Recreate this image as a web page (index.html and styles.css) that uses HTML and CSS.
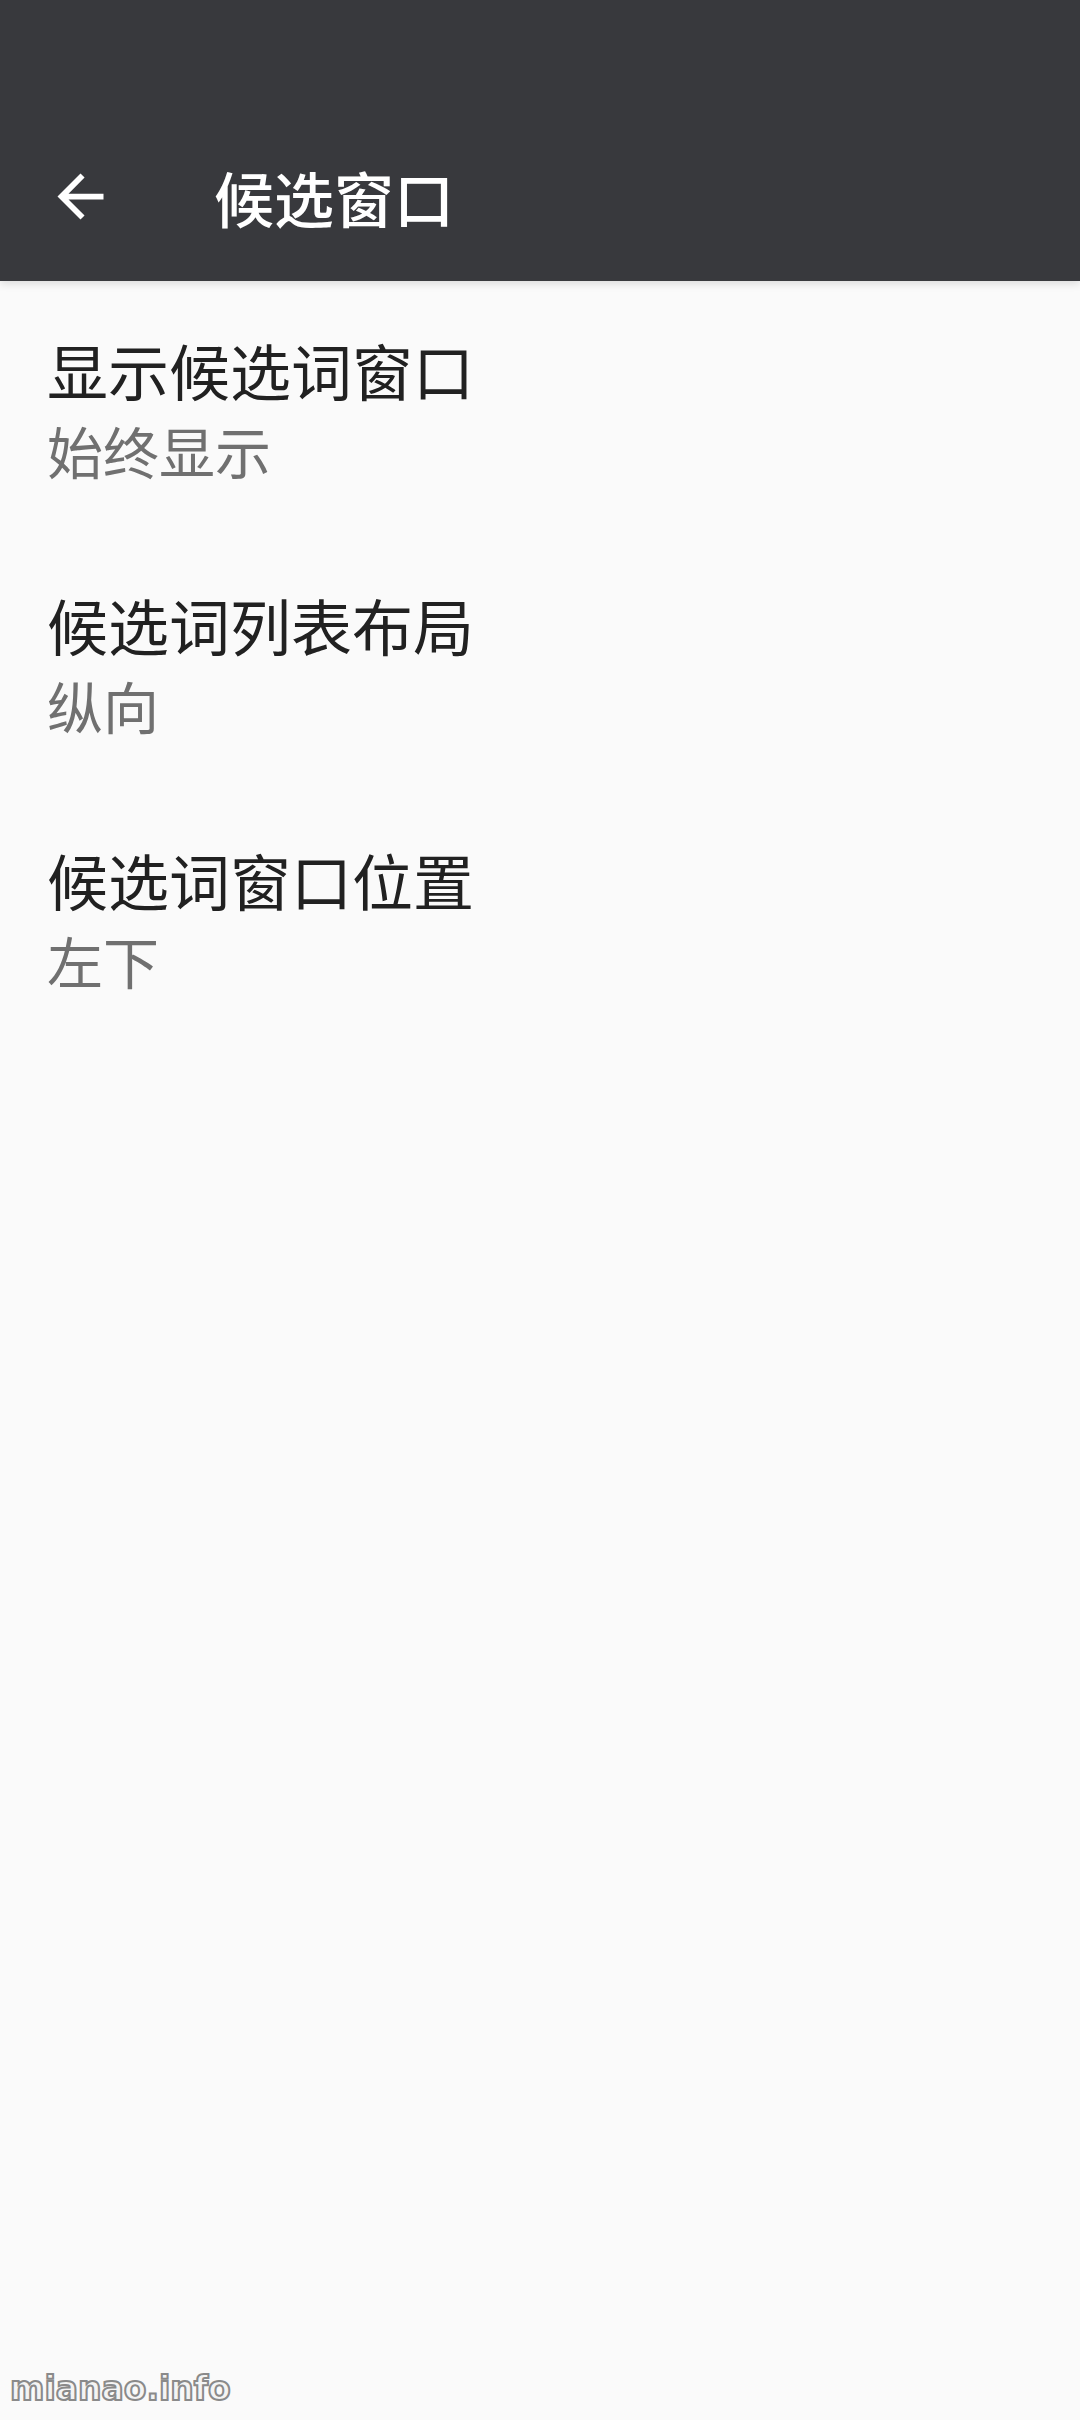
FILE: index.html
```html
<!DOCTYPE html>
<html lang="zh-CN">
<head>
  <meta charset="UTF-8">
  <meta name="viewport" content="width=device-width, initial-scale=1.0">
  <title>候选窗口</title>
  <link rel="stylesheet" href="styles.css">
</head>
<body>
  <header class="toolbar">
    <button class="back" aria-label="返回">
      <svg viewBox="0 0 24 24" width="69" height="69">
        <path d="M20 11H7.83l5.59-5.59L12 4l-8 8 8 8 1.41-1.41L7.83 13H20v-2z" fill="#ffffff"/>
      </svg>
    </button>
    <h1 class="title">候选窗口</h1>
  </header>

  <main class="prefs">
    <div class="pref">
      <div class="pref-title">显示候选词窗口</div>
      <div class="pref-summary">始终显示</div>
    </div>
    <div class="pref">
      <div class="pref-title">候选词列表布局</div>
      <div class="pref-summary">纵向</div>
    </div>
    <div class="pref">
      <div class="pref-title">候选词窗口位置</div>
      <div class="pref-summary">左下</div>
    </div>
  </main>

  <div class="watermark">mianao.info</div>
</body>
</html>
```

FILE: styles.css
```css
html, body {
  margin: 0;
  height: 100%;
}

body {
  background-color: #fafafa;
  font-family: "Noto Sans CJK SC", "Noto Sans", sans-serif;
  position: relative;
  overflow: hidden;
}

.toolbar {
  display: flex;
  align-items: flex-end;
  height: 281px;
  box-sizing: border-box;
  padding: 0 0 50px 46px;
  background-color: #38393d;
  box-shadow: 0 3px 8px rgba(0, 0, 0, 0.12);
  position: relative;
  z-index: 1;
}

.back {
  display: flex;
  padding: 0;
  margin: 0;
  border: none;
  background: none;
  width: 69px;
  height: 69px;
}

.title {
  margin: 0 0 0 99px;
  color: #ffffff;
  font-size: 60px;
  font-weight: 500;
  line-height: 69px;
}

.pref {
  padding: 47px 0 48px 47px;
}

.pref-title {
  font-size: 61px;
  line-height: 84px;
  color: #212121;
}

.pref-summary {
  font-size: 56px;
  line-height: 76px;
  color: #707070;
}

.watermark {
  position: absolute;
  left: 10px;
  bottom: 12px;
  font-family: "DejaVu Sans", sans-serif;
  font-weight: bold;
  font-size: 33px;
  color: #f4f4f4;
  -webkit-text-stroke: 2px #8a8a8a;
}
```
